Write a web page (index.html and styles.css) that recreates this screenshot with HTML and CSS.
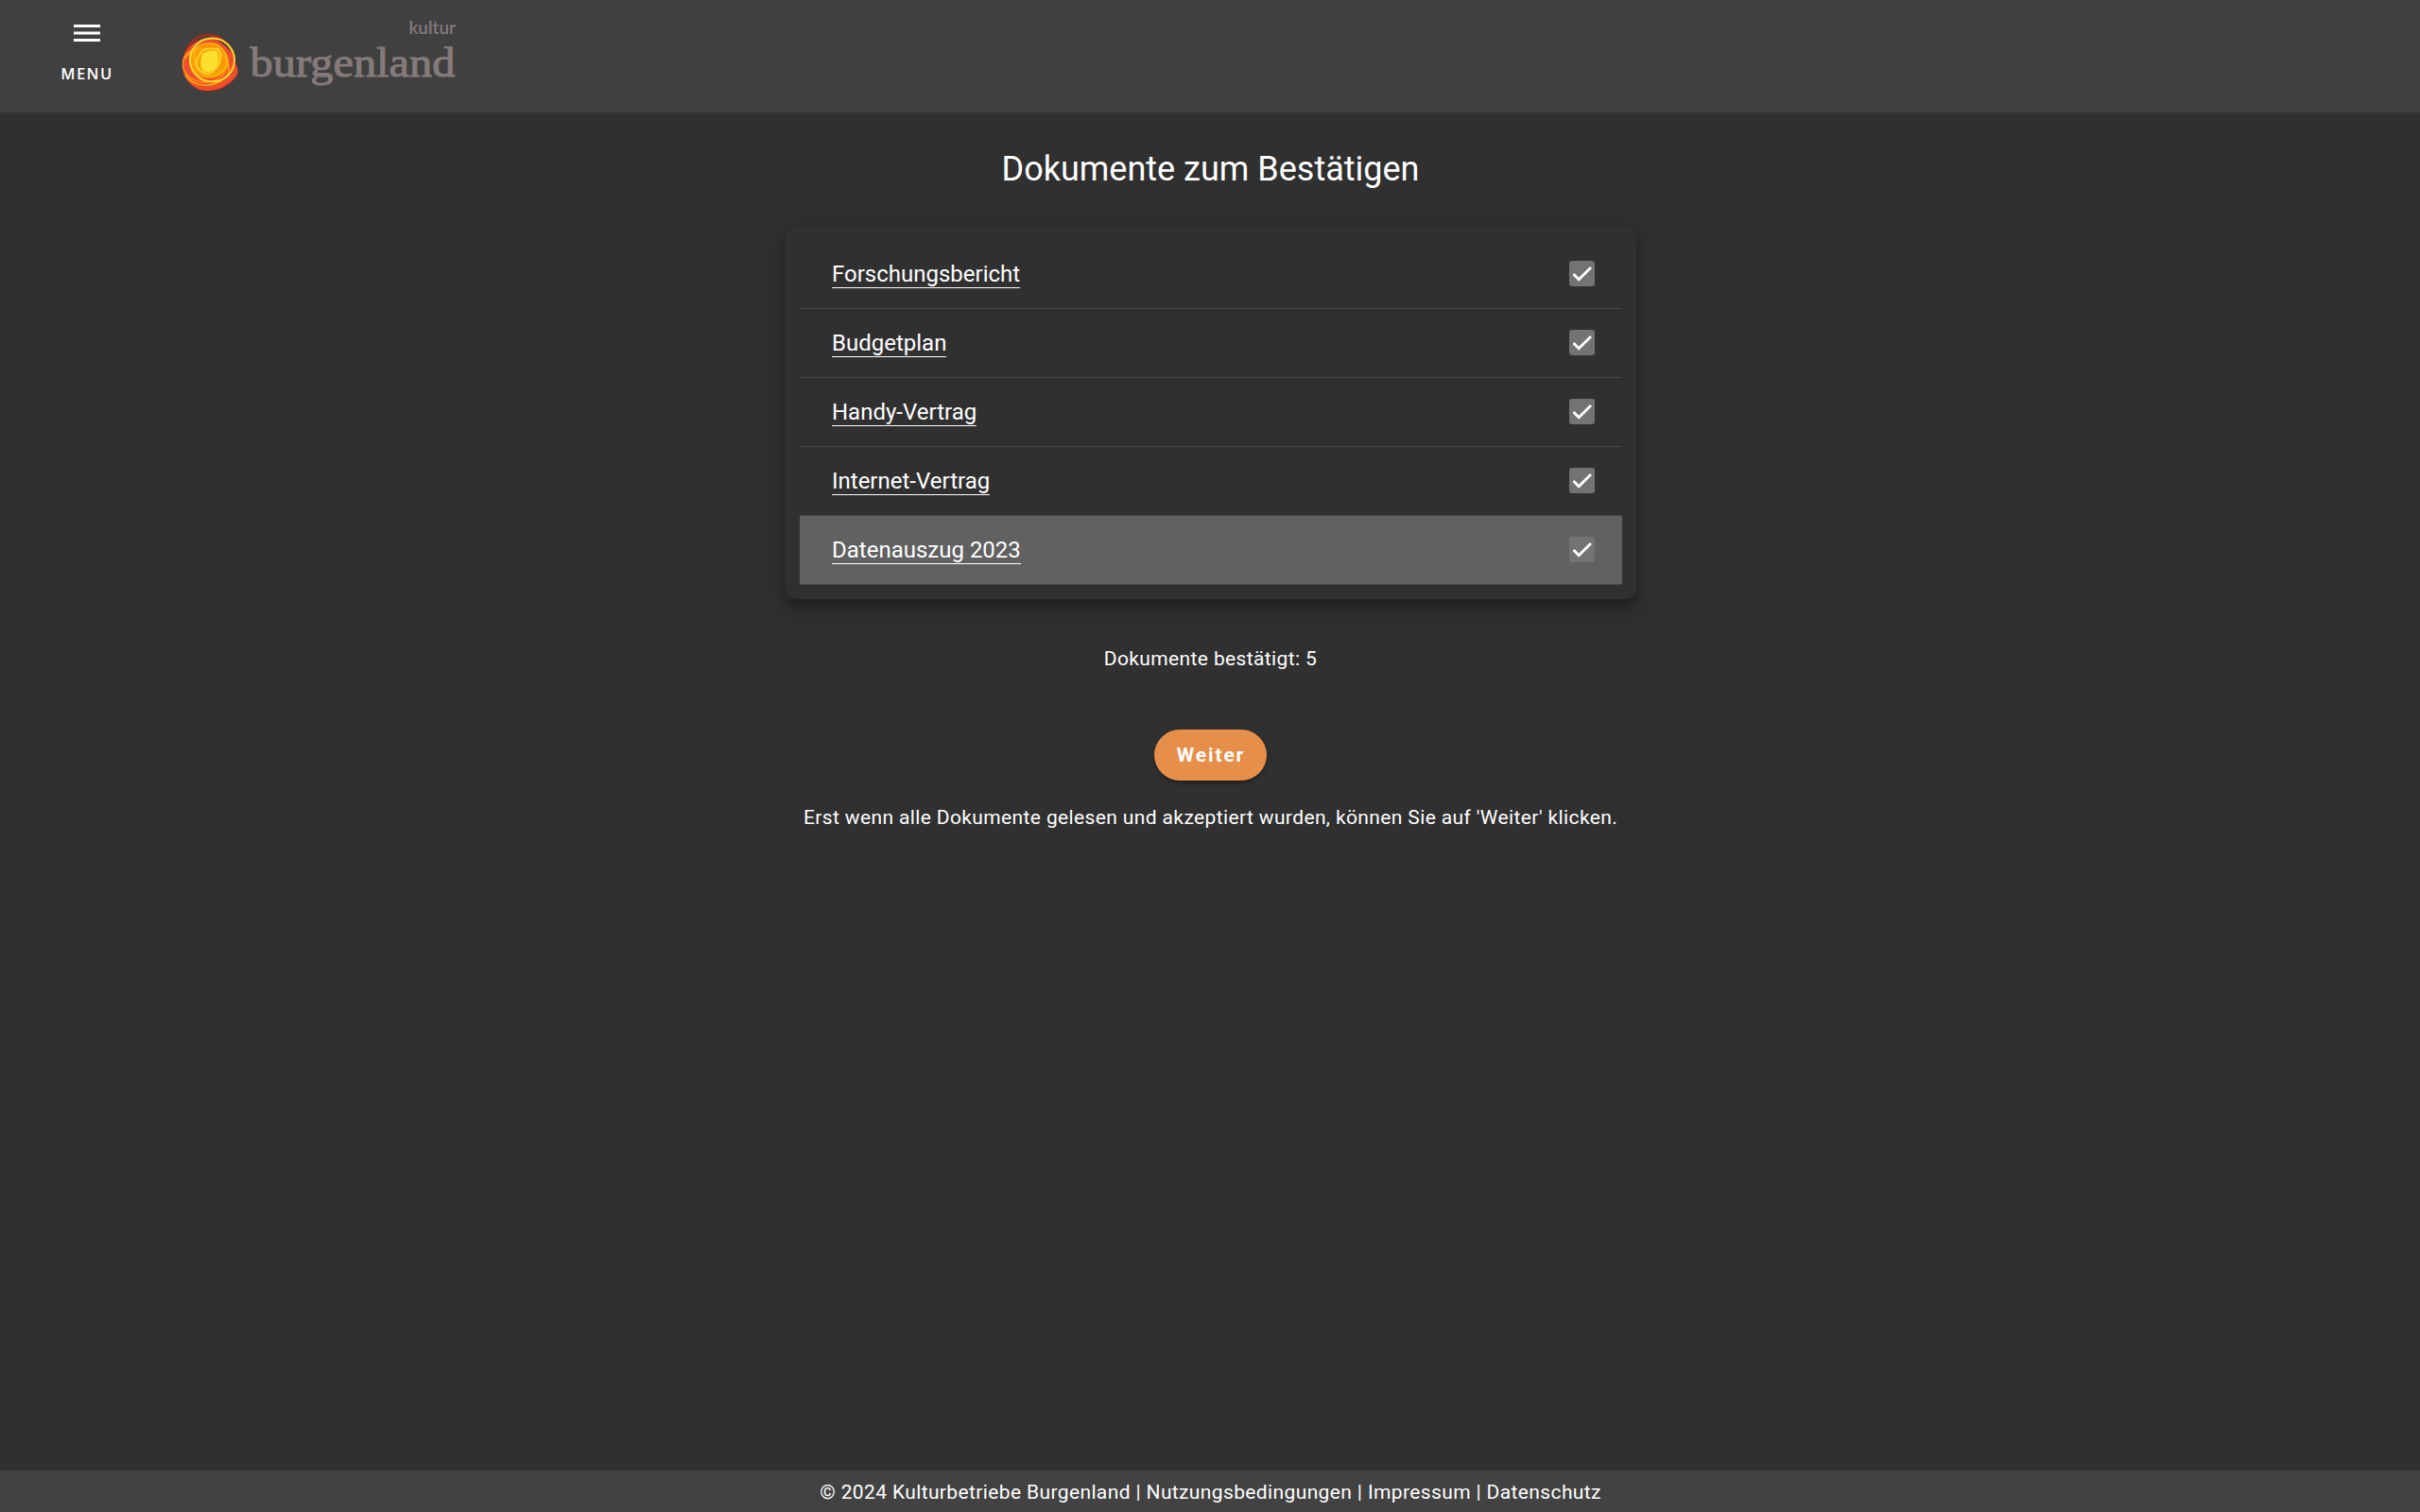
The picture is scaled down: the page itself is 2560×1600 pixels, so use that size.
FILE: index.html
```html
<!DOCTYPE html>
<html lang="de">
<head>
<meta charset="utf-8">
<title>Dokumente zum Bestätigen</title>
<link rel="stylesheet" href="styles.css">
</head>
<body>
<header class="topbar">
  <button class="menu" type="button">
    <svg class="menu-icon" viewBox="0 0 28 18" aria-hidden="true"><path d="M0 0h28v3H0zM0 7.500h28v3H0zM0 15h28v3H0z"/></svg>
    <span>MENU</span>
  </button>
  <svg class="logo" viewBox="0 0 300 84" role="img" aria-label="kultur burgenland">
    <g fill="none" stroke="#b92616" stroke-width="2.200">
      <path d="M4 40C7 27 17 19 28 19c15 0 25 12 28 27 2 13-5 26-20 30"/>
      <path d="M3 56c3 12 10 19 20 21 13 2 27-3 33-15"/>
    </g>
    <path fill="#ee4f2b" d="M16 26C22 22 34 20 41 23c6 2 9 6 11 12 3 4 2 8 4 13 6 8 4 14-2 19-6 4-8 7-15 9-8 2-15 3-22 0C8 71 2 64 1 54 0 46 2 38 7 34c3-4 5-6 9-8z"/>
    <path fill="#404040" d="M37 24c8 1 14 7 15 13-4-6-9-9-15-13z"/>
    <ellipse cx="29" cy="47" rx="21" ry="18" fill="#f89b08"/>
    <path fill="#ffdf2e" d="M22 39c5-4 12-4 16-3 2 7 1 14-2 18-3 4-9 5-13 3-4-4-3-13-1-18z"/>
    <g fill="none" stroke-width="1.500">
      <ellipse cx="25" cy="50" rx="23.500" ry="19" stroke="#ff8e12"/>
      <path d="M3 44c8-12 32-15 42-3 6 8 7 17 2 23" stroke="#ffab0a"/>
      <path d="M4 61c8 12 24 15 39 6" stroke="#ffab0a"/>
      <ellipse cx="32.500" cy="45.500" rx="23.500" ry="23" stroke="#ffdb2e" stroke-width="1.900"/>
      <path d="M15 34c5-7 17-8 25-3 8 6 11 18 5 25-7 8-19 8-26 1-6-6-7-17-4-23z" stroke="#ffb80e"/>
      <path d="M19 40c5-8 13-7 20-6 5 7 1 18-6 24-6 4-15 0-17-7-1-4 1-8 3-11z" stroke="#ffd426" stroke-width="2"/>
    </g>
    <text class="logo-sub" x="240.500" y="18" textLength="49.500" lengthAdjust="spacingAndGlyphs">kultur</text>
    <text class="logo-name" x="72.500" y="62.500" textLength="217" lengthAdjust="spacingAndGlyphs">burgenland</text>
  </svg>
</header>
<main class="content">
  <h1 class="title">Dokumente zum Bestätigen</h1>
  <ul class="card">
    <li class="row"><a class="doc">Forschungsbericht</a><svg class="check" viewBox="0 0 27 27"><path d="M4.500 14l5.700 5.700L23 6.900"/></svg></li>
    <li class="row"><a class="doc">Budgetplan</a><svg class="check" viewBox="0 0 27 27"><path d="M4.500 14l5.700 5.700L23 6.900"/></svg></li>
    <li class="row"><a class="doc">Handy-Vertrag</a><svg class="check" viewBox="0 0 27 27"><path d="M4.500 14l5.700 5.700L23 6.900"/></svg></li>
    <li class="row"><a class="doc">Internet-Vertrag</a><svg class="check" viewBox="0 0 27 27"><path d="M4.500 14l5.700 5.700L23 6.900"/></svg></li>
    <li class="row active"><a class="doc">Datenauszug 2023</a><svg class="check" viewBox="0 0 27 27"><path d="M4.500 14l5.700 5.700L23 6.900"/></svg></li>
  </ul>
  <p class="count">Dokumente bestätigt: 5</p>
  <button class="next" type="button">Weiter</button>
  <p class="hint">Erst wenn alle Dokumente gelesen und akzeptiert wurden, können Sie auf 'Weiter' klicken.</p>
</main>
<footer class="footer">© 2024 Kulturbetriebe Burgenland | Nutzungsbedingungen | Impressum | Datenschutz</footer>
</body>
</html>
```
FILE: styles.css
```css
* { box-sizing: border-box; }
body {
  margin: 0;
  height: 1600px;
  display: flex;
  flex-direction: column;
  background: #303030;
  color: #fff;
  font-family: Roboto, "Liberation Sans", sans-serif;
  font-size: 21px;
  line-height: 30px;
  letter-spacing: 0.375px;
}
button { font: inherit; color: inherit; border: 0; }
.topbar {
  height: 119px;
  flex: none;
  display: flex;
  align-items: flex-start;
  background: #404040;
}
.menu {
  width: 184px;
  padding: 26px 0 0;
  display: flex;
  flex-direction: column;
  align-items: center;
  gap: 24px;
  background: none;
  font-family: "Open Sans", sans-serif;
  font-size: 16.500px;
  font-weight: 600;
  line-height: 20px;
  letter-spacing: 1.500px;
}
.menu-icon { width: 28px; height: 18px; fill: #fff; }
.logo { width: 300px; height: 84px; margin: 18px 0 0 8px; }
.logo text { fill: #857a7a; letter-spacing: 0; }
.logo-sub { font: 600 19px Lato, sans-serif; }
.logo-name { font: 400 45px "Liberation Serif", serif; stroke: #857a7a; stroke-width: 1; }
.content {
  flex: 1;
  display: flex;
  flex-direction: column;
  align-items: center;
  padding-left: 1px;
}
.title {
  margin: 36px 0 36px;
  font-size: 36px;
  font-weight: 400;
  line-height: 48px;
  letter-spacing: 0;
}
.card {
  width: 900px;
  margin: 0 0 0 1px;
  padding: 15px;
  list-style: none;
  border-radius: 12px;
  box-shadow: 0 7.500px 7.500px -4.500px rgba(0,0,0,.2), 0 12px 15px 1.500px rgba(0,0,0,.14), 0 4.500px 21px 3px rgba(0,0,0,.12);
  background: #303030;
}
.row {
  height: 73px;
  padding: 0 29px 0 34px;
  display: flex;
  align-items: center;
  justify-content: space-between;
  border-bottom: 1px solid #484848;
}
.active { background: #616161; }
.doc {
  font-size: 24px;
  line-height: 28px;
  letter-spacing: 0;
  border-bottom: 1px solid #fff;
}
.check {
  width: 27px;
  height: 27px;
  margin-bottom: 1px;
  border-radius: 3px;
  background: #737373;
  fill: none;
  stroke: #fff;
  stroke-width: 2.800;
}
.count { margin: 48px 0 0; }
.next {
  width: 119px;
  height: 54px;
  margin: 60px 0 24px;
  padding: 0 0 0 1px;
  border-radius: 27px;
  background: #e58f4a;
  font-weight: 700;
  letter-spacing: 1.875px;
  box-shadow: 0 4.500px 1.500px -3px rgba(0,0,0,.2), 0 3px 3px rgba(0,0,0,.14), 0 1.500px 7.500px rgba(0,0,0,.12);
}
.hint { margin: 0; }
.footer {
  height: 44px;
  flex: none;
  padding-left: 1px;
  background: #424242;
  text-align: center;
  line-height: 46px;
}
```
